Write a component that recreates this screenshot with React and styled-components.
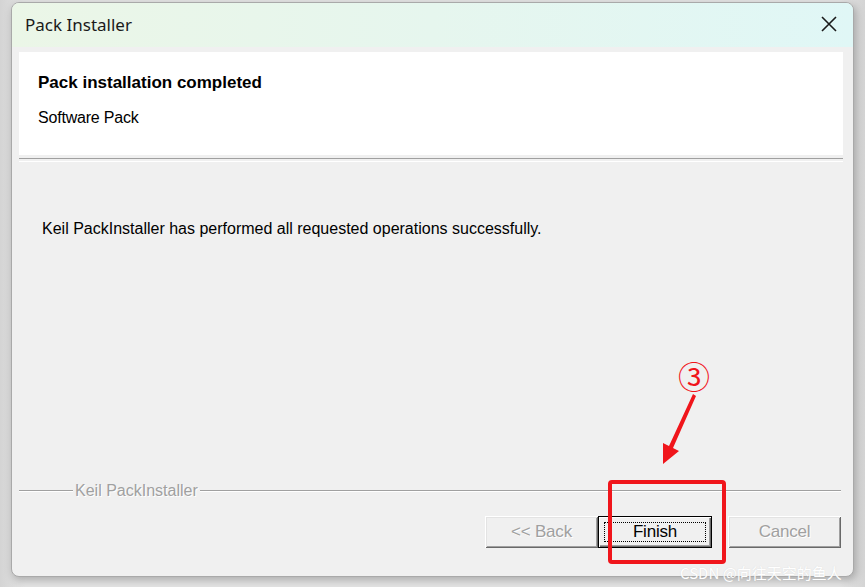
import React from "react";
import styled, { createGlobalStyle } from "styled-components";

const Global = createGlobalStyle`
  html, body { margin: 0; padding: 0; }
  body {
    background: linear-gradient(90deg, #d4d4d4 0%, #e4e4e4 3%, #e4e4e4 97%, #d4d4d4 100%);
    width: 865px; height: 587px; overflow: hidden;
    font-family: "Liberation Sans", Arial, sans-serif;
  }
`;

const Stage = styled.div`
  position: relative;
  width: 865px;
  height: 587px;
  padding: 2px 0 0 11px;
  box-sizing: border-box;
`;

const Window = styled.div`
  width: 843px;
  height: 575px;
  box-sizing: border-box;
  border: 1px solid #a9a9a9;
  border-radius: 8px;
  overflow: hidden;
  background: #f0f0f0;
  display: flex;
  flex-direction: column;
  box-shadow: 2px 3px 8px rgba(0, 0, 0, 0.25);
`;

const TitleBar = styled.div`
  height: 44px;
  flex: none;
  display: flex;
  align-items: center;
  justify-content: space-between;
  padding: 0 14px 2px 13px;
  box-sizing: border-box;
  background: linear-gradient(90deg, #ebf6e7 0%, #e6f6ee 50%, #e0f7f6 100%);
`;

const Title = styled.div`
  font-family: "Noto Sans", "Open Sans", sans-serif;
  font-size: 17px;
  color: #1a1a1a;
`;

const Close = styled.div`
  width: 20px;
  height: 20px;
  display: flex;
  align-items: center;
  justify-content: center;
`;

const Body = styled.div`
  flex: 1;
  display: flex;
  flex-direction: column;
  padding: 5px 10px 0 7px;
`;

const Header = styled.div`
  height: 103px;
  background: #ffffff;
  display: flex;
  flex-direction: column;
  padding: 21px 0 0 19px;
  box-sizing: border-box;
`;

const HeaderTitle = styled.div`
  font-weight: bold;
  font-size: 17px;
  color: #000;
`;

const HeaderSub = styled.div`
  font-size: 16px;
  color: #000;
  margin-top: 16px;
  letter-spacing: -0.2px;
`;

const Etched = styled.div`
  height: 2px;
  margin-top: 3px;
  border-top: 1px solid #a0a0a0;
  border-bottom: 1px solid #ffffff;
`;

const Message = styled.div`
  margin: 58px 0 0 23px;
  font-size: 16px;
  color: #000;
`;

const Spacer = styled.div`
  flex: 1;
`;

const Group = styled.div`
  display: flex;
  align-items: center;
  gap: 2px;
  margin-right: 2px;
  height: 18px;
`;

const GroupLine = styled.div`
  height: 0;
  border-top: 1px solid #a0a0a0;
  border-bottom: 1px solid #ffffff;
  flex: ${(p) => (p.$grow ? 1 : "none")};
  width: ${(p) => (p.$grow ? "auto" : "54px")};
`;

const GroupLabel = styled.span`
  font-size: 16px;
  color: #a0a0a0;
  text-shadow: 1px 1px 0 #ffffff;
`;

const Buttons = styled.div`
  display: flex;
  justify-content: flex-end;
  margin: 16px 2px 28px 0;
  height: 32px;
`;

const Button = styled.div`
  width: ${(p) => (p.$w ? p.$w : 113)}px;
  height: 32px;
  box-sizing: border-box;
  margin-left: ${(p) => p.$ml || 0}px;
  background: #f0f0f0;
  display: flex;
  align-items: center;
  justify-content: center;
  font-size: 17px;
  color: ${(p) => (p.$disabled ? "#a0a0a0" : "#000")};
  text-shadow: ${(p) => (p.$disabled ? "1px 1px 0 #fff" : "none")};
  border: ${(p) => (p.$default ? "1px solid #000" : "none")};
  box-shadow: ${(p) =>
    p.$default
      ? "inset 1px 1px 0 #ffffff, inset -1px -1px 0 #696969, inset -2px -2px 0 #a0a0a0"
      : "inset 1px 1px 0 #ffffff, inset -1px -1px 0 #696969, inset 2px 2px 0 #e3e3e3, inset -2px -2px 0 #a0a0a0"};
  letter-spacing: -0.2px;
`;

const Focus = styled.div`
  width: calc(100% - 10px);
  height: calc(100% - 10px);
  border: 1px dotted #000;
  box-sizing: border-box;
  display: flex;
  align-items: center;
  justify-content: center;
`;

const RedBox = styled.div`
  position: absolute;
  left: 608px;
  top: 480px;
  width: 118px;
  height: 84px;
  box-sizing: border-box;
  border: 4px solid #f0151b;
  border-radius: 4px;
`;

const Circled = styled.div`
  position: absolute;
  left: 678px;
  top: 358px;
  font-family: "Noto Sans CJK SC", "DejaVu Sans", sans-serif;
  font-size: 32px;
  line-height: 34px;
  color: #f0151b;
`;

const Arrow = styled.svg`
  position: absolute;
  left: 655px;
  top: 392px;
`;

const Watermark = styled.div`
  position: absolute;
  left: 680px;
  top: 562px;
  font-family: "Noto Sans CJK SC", "Liberation Sans", sans-serif;
  font-size: 15px;
  color: #ffffff;
  text-shadow: 0 0 1px rgba(160, 160, 160, 0.35);
  white-space: nowrap;
`;

export default function App() {
  return (
    <>
      <Global />
      <Stage>
        <Window>
          <TitleBar>
            <Title>Pack Installer</Title>
            <Close>
              <svg width="18" height="18" viewBox="0 0 18 18">
                <path d="M2 2 L16 16 M16 2 L2 16" stroke="#1a1a1a" strokeWidth="1.6" />
              </svg>
            </Close>
          </TitleBar>
          <Body>
            <Header>
              <HeaderTitle>Pack installation completed</HeaderTitle>
              <HeaderSub>Software Pack</HeaderSub>
            </Header>
            <Etched />
            <Message>
              Keil PackInstaller has performed all requested operations successfully.
            </Message>
            <Spacer />
            <Group>
              <GroupLine />
              <GroupLabel>Keil PackInstaller</GroupLabel>
              <GroupLine $grow />
            </Group>
            <Buttons>
              <Button $disabled>&lt;&lt; Back</Button>
              <Button $default $w={114}>
                <Focus>Finish</Focus>
              </Button>
              <Button $disabled $ml={16}>Cancel</Button>
            </Buttons>
          </Body>
        </Window>
        <Circled>③</Circled>
        <Arrow width="44" height="74" viewBox="0 0 44 74">
          <path d="M38 2 L41 4 L18 56 L24 59 L8 72 L8 51 L14 54 Z" fill="#f0151b" />
        </Arrow>
        <RedBox />
        <Watermark>CSDN @向往天空的鱼人</Watermark>
      </Stage>
    </>
  );
}
